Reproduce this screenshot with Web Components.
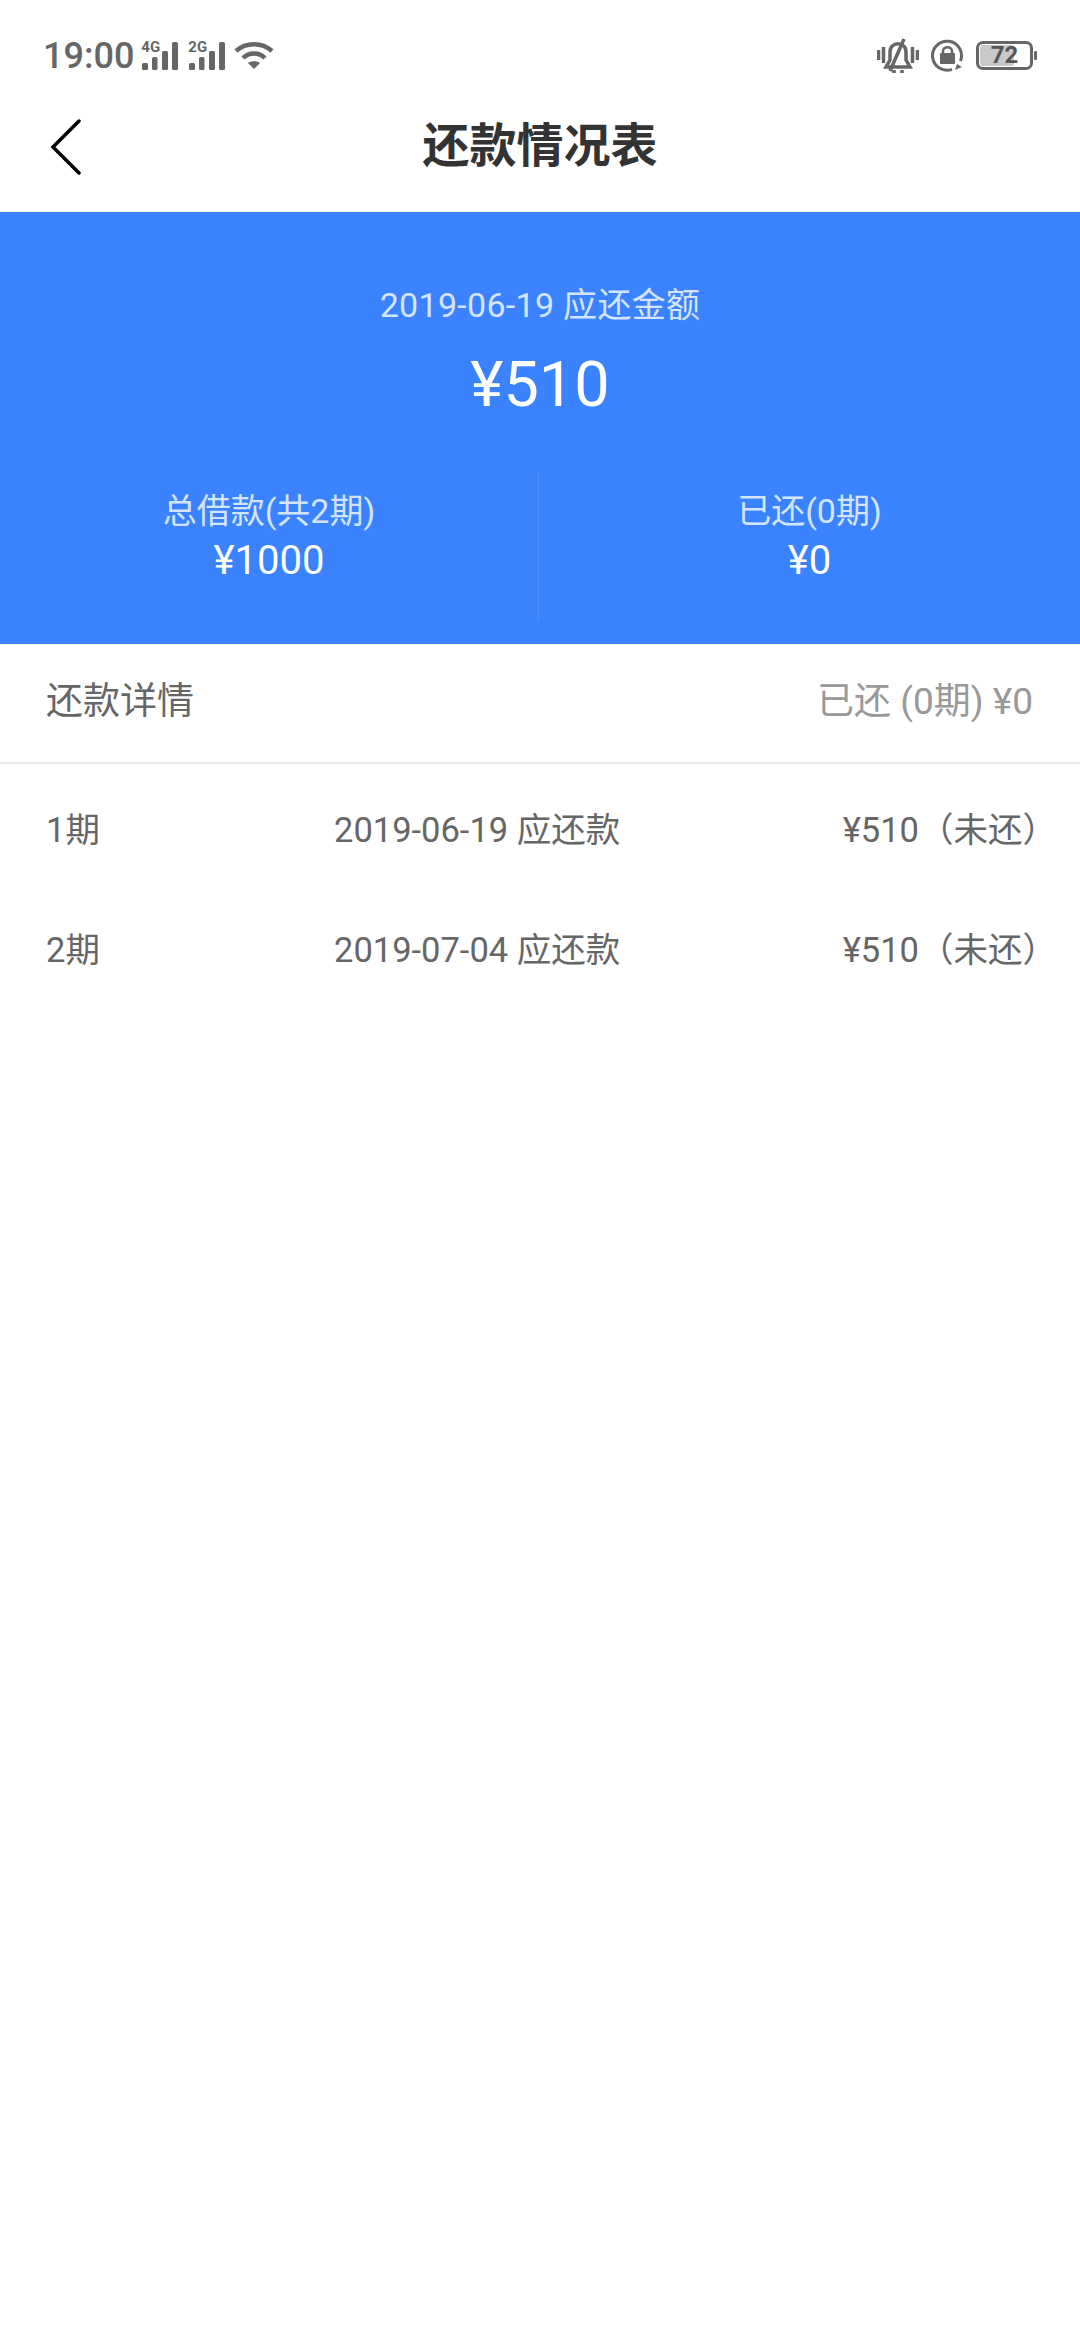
<!DOCTYPE html>
<html lang="zh">
<head>
<meta charset="utf-8">
<title>还款情况表</title>
<style>
  html, body { margin: 0; padding: 0; background: #fff; }
  body { width: 1080px; height: 2340px; overflow: hidden; font-family: Roboto, "Noto Sans CJK SC", sans-serif; }
</style>
</head>
<body>
<status-bar></status-bar>
<nav-bar>还款情况表</nav-bar>
<summary-panel date="2019-06-19 应还金额" amount="¥510">
  <stat-cell label="总借款(共2期)" value="¥1000"></stat-cell>
  <stat-cell label="已还(0期)" value="¥0"></stat-cell>
</summary-panel>
<detail-header title="还款详情" paid="已还 (0期) ¥0"></detail-header>
<repay-row period="1期" due="2019-06-19 应还款" amount="¥510（未还）"></repay-row>
<repay-row period="2期" due="2019-07-04 应还款" amount="¥510（未还）"></repay-row>

<script>
class SignalIcon extends HTMLElement {
  connectedCallback() {
    const name = this.getAttribute('name');
    this.attachShadow({ mode: 'open' }).innerHTML = `
      <style>
        :host { display: block; position: relative; width: 37px; height: 28px; }
        svg { display: block; }
        span {
          position: absolute;
          left: -1px;
          top: -3px;
          font-size: 15px;
          line-height: 16px;
          font-weight: 700;
          color: #666;
        }
      </style>
      <svg width="37" height="28" viewBox="0 0 37 28" fill="#666">
        <rect x="0" y="21" width="6" height="7" rx="1.5"/>
        <rect x="10" y="15" width="5.5" height="13" rx="1.5"/>
        <rect x="20" y="9" width="6" height="19" rx="1.5"/>
        <rect x="30" y="0" width="6" height="28" rx="1.5"/>
      </svg>
      <span>${name}</span>
    `;
  }
}

class StatusBar extends HTMLElement {
  constructor() {
    super();
    this.attachShadow({ mode: 'open' }).innerHTML = `
      <style>
        :host {
          display: flex;
          align-items: center;
          box-sizing: border-box;
          height: 70px;
          padding: 41px 43px 0 43px;
          color: #666;
        }
        .time { font-size: 36px; font-weight: 500; line-height: 30px; margin-right: 8px; }
        signal-icon { margin-right: 10px; }
        .wifi { margin-left: -2px; }
        .right { margin-left: auto; display: flex; align-items: center; }
        .lock { margin-left: 12px; }
        .battery {
          position: relative;
          box-sizing: border-box;
          width: 57px;
          height: 29px;
          margin-left: 12px;
          border: 3px solid #666;
          border-radius: 7px;
          text-align: center;
          font-size: 24px;
          line-height: 23px;
          font-weight: 700;
          color: #555;
        }
        .battery i {
          position: absolute;
          left: 1px; top: 1px; bottom: 1px;
          width: 34px;
          background: #c9c9c9;
          border-radius: 3px;
        }
        .battery span { position: relative; }
        .nub { width: 3px; height: 9px; margin-left: 1px; background: #666; border-radius: 1px; }
      </style>
      <span class="time">19:00</span>
      <signal-icon name="4G"></signal-icon>
      <signal-icon name="2G"></signal-icon>
      <svg class="wifi" width="40" height="30" viewBox="0 0 40 30" fill="none" stroke="#666" stroke-width="4.5">
        <path d="M2 10 C12 1 28 1 38 10"/>
        <path d="M9 17 C15 11 25 11 31 17"/>
        <path d="M20 28 L14 22 C17 19.500 23 19.500 26 22 Z" fill="#666" stroke="none"/>
      </svg>
      <div class="right">
        <svg width="42" height="36" viewBox="0 0 42 36" fill="none" stroke="#666" stroke-width="3.5">
          <path d="M1.500 12 V22 M6.500 9 V25 M35.500 9 V25 M40.500 12 V22"/>
          <path d="M9 29 H33 L29 22 V14 C29 3 13 3 13 14 V22 Z"/>
          <path d="M27 1 L13 33 M17 32 V35 M25 32 V35"/>
        </svg>
        <svg class="lock" width="33" height="33" viewBox="0 0 33 33" fill="none">
          <path d="M29.500 22 A14.500 14.500 0 1 0 21 30.300" stroke="#666" stroke-width="3"/>
          <path d="M26 25 L31 28 L24 31 Z" fill="#666"/>
          <rect x="9" y="14" width="15" height="11" rx="1" fill="#666"/>
          <path d="M12 15 V12 C12 7 21 7 21 12 V15" stroke="#666" stroke-width="2.500"/>
        </svg>
        <div class="battery"><i></i><span>72</span></div>
        <div class="nub"></div>
      </div>
    `;
  }
}

class NavBar extends HTMLElement {
  constructor() {
    super();
    this.attachShadow({ mode: 'open' }).innerHTML = `
      <style>
        :host {
          display: flex;
          align-items: center;
          justify-content: center;
          position: relative;
          box-sizing: border-box;
          height: 142px;
          font-size: 47px;
          font-weight: 700;
          color: #333;
        }
        svg { position: absolute; left: 50px; top: 49px; }
      </style>
      <svg width="32" height="56" viewBox="0 0 32 56" fill="none" stroke="#000" stroke-width="3.500" stroke-linecap="round">
        <path d="M29 2 L3 28 L29 54"/>
      </svg>
      <slot></slot>
    `;
  }
}

class SummaryPanel extends HTMLElement {
  connectedCallback() {
    this.attachShadow({ mode: 'open' }).innerHTML = `
      <style>
        :host {
          display: block;
          box-sizing: border-box;
          height: 432px;
          padding-top: 68px;
          background: #3b82ff;
          text-align: center;
        }
        .date { font-size: 34px; letter-spacing: 0.3px; line-height: 50px; color: #d4e4ff; }
        .amount { font-size: 63px; line-height: 70px; margin-top: 20px; color: #fff; }
        .stats { display: grid; grid-template-columns: 538px 1px 1fr; margin-top: 53px; height: 147px; }
        .line { background: #4f8fff; }
      </style>
      <div class="date">${this.getAttribute('date')}</div>
      <div class="amount">${this.getAttribute('amount')}</div>
      <div class="stats">
        <slot name="left"></slot>
        <div class="line"></div>
        <slot name="right"></slot>
      </div>
    `;
    const cells = this.querySelectorAll('stat-cell');
    cells[0].slot = 'left';
    cells[1].slot = 'right';
  }
}

class StatCell extends HTMLElement {
  connectedCallback() {
    this.attachShadow({ mode: 'open' }).innerHTML = `
      <style>
        :host { display: block; padding-top: 14px; text-align: center; }
        .label { font-size: 34px; line-height: 49px; color: #d4e4ff; }
        .value { font-size: 40px; line-height: 50px; color: #fff; }
      </style>
      <div class="label">${this.getAttribute('label')}</div>
      <div class="value">${this.getAttribute('value')}</div>
    `;
  }
}

class DetailHeader extends HTMLElement {
  connectedCallback() {
    this.attachShadow({ mode: 'open' }).innerHTML = `
      <style>
        :host {
          display: flex;
          align-items: center;
          justify-content: space-between;
          box-sizing: border-box;
          height: 120px;
          padding: 0 47px 10px 46px;
          border-bottom: 2px solid #ebebeb;
          font-size: 37px;
        }
        .title { color: #666; }
        .paid { color: #999; }
      </style>
      <span class="title">${this.getAttribute('title')}</span>
      <span class="paid">${this.getAttribute('paid')}</span>
    `;
  }
}

class RepayRow extends HTMLElement {
  connectedCallback() {
    this.attachShadow({ mode: 'open' }).innerHTML = `
      <style>
        :host {
          display: grid;
          grid-template-columns: 288px 1fr auto;
          align-items: center;
          height: 120px;
          padding: 6px 23px 0 46px;
          box-sizing: border-box;
          font-size: 34.5px;
          color: #666;
        }
      </style>
      <span>${this.getAttribute('period')}</span>
      <span>${this.getAttribute('due')}</span>
      <span>${this.getAttribute('amount')}</span>
    `;
  }
}

customElements.define('signal-icon', SignalIcon);
customElements.define('status-bar', StatusBar);
customElements.define('nav-bar', NavBar);
customElements.define('summary-panel', SummaryPanel);
customElements.define('stat-cell', StatCell);
customElements.define('detail-header', DetailHeader);
customElements.define('repay-row', RepayRow);
</script>
</body>
</html>
